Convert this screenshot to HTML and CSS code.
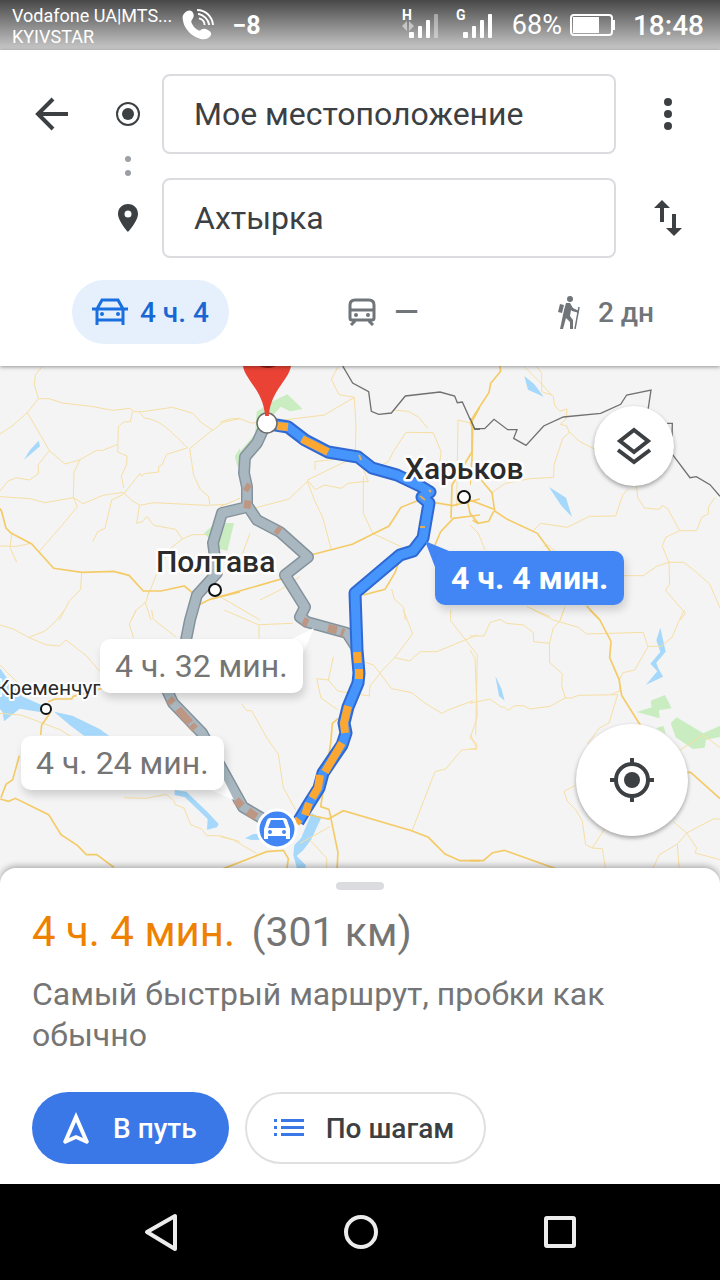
FILE: index.html
```html
<!DOCTYPE html>
<html lang="ru">
<head>
<meta charset="utf-8">
<meta name="viewport" content="width=device-width, initial-scale=1">
<title>Маршрут: Ахтырка</title>
<link rel="stylesheet" href="styles.css">
</head>
<body>
<div class="statusbar">
  <div class="carriers"><span>Vodafone UA|MTS...</span><span>KYIVSTAR</span></div>
  <svg class="call" width="32" height="34" viewBox="0 0 34 34" fill="none" stroke="#fff">
    <path fill="#fff" stroke="none" d="M3 4c3-3 6-3 8-1 2 3 2 5 0 8-2 2-1 4 1 7 2 3 4 4 7 5 2-2 5-3 8-1 4 2 5 4 3 7-3 4-9 4-15 1C7 26 2 19 1 12 0 8 1 6 3 4z"/>
    <path stroke-width="2" d="M18 10c4 1 6 3 6 7M17 5c6 1 11 6 12 12M16 1c9 0 16 7 17 16"/>
  </svg>
  <span class="temp">−8</span>
  <div class="status-right">
    <svg width="94" height="32" viewBox="0 0 94 32" fill="#fff">
      <text class="net" x="0" y="11">H</text><text class="net" x="54" y="11">G</text>
      <path d="M0 17l5-5v10zM12 17l-5-5v10z" opacity=".5"/>
      <rect x="7" y="23" width="5" height="6" rx="1"/><rect x="16" y="17" width="4" height="12" rx="1"/><rect x="24" y="11" width="4" height="18" rx="1"/><rect x="32" y="5" width="4" height="24" rx="1" opacity=".4"/>
      <rect x="61" y="23" width="5" height="6" rx="1"/><rect x="70" y="17" width="4" height="12" rx="1"/><rect x="78" y="11" width="4" height="18" rx="1"/><rect x="86" y="5" width="4" height="24" rx="1"/>
    </svg>
    <span class="percent">68%</span>
    <svg width="46" height="24" viewBox="0 0 46 24"><rect x="1" y="2" width="41" height="20" rx="3" fill="none" stroke="#fff" stroke-width="2"/><rect x="3" y="4" width="26" height="16" fill="#fff"/><path d="M43 7h2v10h-2z" fill="#fff"/></svg>
    <span class="clock">18:48</span>
  </div>
</div>

<header class="directions">
  <form class="points">
    <button class="icon-btn back" type="button" aria-label="Назад"><svg width="36" height="36" viewBox="0 0 36 36" fill="none" stroke="#3c4043" stroke-width="4"><path d="M34 18H5M19 3L4 18l15 15"/></svg></button>
    <label class="point-icon from" for="from" aria-label="Откуда"><svg width="24" height="24" viewBox="0 0 24 24"><circle cx="12" cy="12" r="11" fill="none" stroke="#3c4043" stroke-width="2"/><circle cx="12" cy="12" r="6" fill="#3c4043"/></svg></label>
    <input id="from" class="field from-field" type="text" value="Мое местоположение">
    <button class="icon-btn menu" type="button" aria-label="Меню"><svg width="8" height="32" viewBox="0 0 8 32" fill="#3c4043"><circle cx="4" cy="4" r="4"/><circle cx="4" cy="16" r="4"/><circle cx="4" cy="28" r="4"/></svg></button>
    <span class="between"><svg width="6" height="22" viewBox="0 0 6 22" fill="#9aa0a6"><circle cx="3" cy="4" r="3"/><circle cx="3" cy="18" r="3"/></svg></span>
    <label class="point-icon to" for="to" aria-label="Куда"><svg width="20" height="28" viewBox="0 0 20 28"><path fill="#3c4043" fill-rule="evenodd" d="M10 0C4 0 0 4.400 0 10c0 7 10 18 10 18s10-11 10-18C20 4.400 16 0 10 0zm0 6.500a3.500 3.500 0 1 1 0 7 3.500 3.500 0 0 1 0-7z"/></svg></label>
    <input id="to" class="field to-field" type="text" value="Ахтырка">
    <button class="icon-btn swap" type="button" aria-label="Поменять местами"><svg width="28" height="36" viewBox="0 0 28 36" fill="#3c4043"><path d="M8 0l8 8h-6v14H6V8H0zM18 14h4v14h6l-8 8-8-8h6z"/></svg></button>
  </form>
  <nav class="modes">
    <button class="mode active" type="button">
      <svg width="36" height="28" viewBox="0 0 36 28" fill="none" stroke="#1a6fe0" stroke-width="3"><path d="M5 11L10 2h16l5 9v11H5zM0 11h36M5 20v7M31 20v7"/><circle cx="10" cy="16" r="2" fill="#1a6fe0" stroke="none"/><circle cx="26" cy="16" r="2" fill="#1a6fe0" stroke="none"/></svg>
      <span>4 ч. 4</span></button>
    <button class="mode" type="button">
      <svg width="28" height="28" viewBox="0 0 28 28" fill="none" stroke="#70757a" stroke-width="3"><path d="M7 2h14q5 0 5 5v13q0 2-2 2H4q-2 0-2-2V7q0-5 5-5zM2 12h24M7 23l-4 4M21 23l4 4"/><circle cx="8" cy="17" r="2" fill="#70757a" stroke="none"/><circle cx="20" cy="17" r="2" fill="#70757a" stroke="none"/></svg>
      <span class="none">—</span></button>
    <button class="mode" type="button">
      <svg width="22" height="33" viewBox="0 0 22 33" fill="#70757a"><circle cx="12" cy="3" r="3"/><path d="M2 8l4 1-2 8-4-1zM8 7h4l3 5 6 3v2l-7-2-1-1-1 6 3 4v9h-3v-7l-4-4-3 11H2L6 14z"/><path d="M21 11l-4 22" stroke="#70757a" stroke-width="1.500"/></svg>
      <span>2 дн</span></button>
  </nav>
</header>

<main class="map">
  <svg class="map-canvas" viewBox="0 366 720 518" preserveAspectRatio="xMidYMid slice" fill="none">
    <rect x="0" y="366" width="720" height="518" fill="#f4f4f4"/>

    <svg x="0" y="360" width="240" height="260" viewBox="0 0 720 780">
      <path class="water" d="M72 299l18-29 26-28 4 17z"/>
      <path class="park" d="M720 265l-15 22 7 24h8zM612 520l34-30h55l-30 80-18-10z"/>
      <path class="minor" d="M126 20l-20 25-3 28 12 43-33 42-46 40-36 24M115 116h32l40 13 86 10 65 12 51-6 13 10h25l90-13 62 18 25 28 35 23 30-24 54-12M637 210l-68 56 12 80 20 42 25 22 3 22M563 264c-60-60-85-85-130-90l-15-18M397 155l-6 30-20 1-16 14-2 76 28 12-1 25-16 35 7 35M353 253l-45 18h-18l-52 29-43 12-46-39-67-115M148 272l-34 43 2 25-27 20-40-7-25 10-24 30M240 300l-18 36-2 76 12 28-46 56-70 80M0 410l90 6 45 12 86-15 28 18 60-25 61-9 25 24 25 15 40-8 160 8 60-3M370 403l50-63 5 9 8-8 43-5v-16l10-5 14-32 64-20M370 403l-35 17-20 85-22 10-15 30M418 438l-8 52 17-5 14-16 20 27 66 12 20 29 30-13h42M548 536l-35 28-40 70-28 70M0 558l50 1 42-9M35 524l-5 38 20 45M245 638l-3 50-34 35-30 58M446 695l-7 30-30 25-15 31M435 725l18 55"/>
      <path class="major" d="M0 445l5 10 13 49 15 15 62 33 66 73 85 12 95-3 46 12 43 47h53l70-15 30 25M600 733l30-15 90-22"/>
    </svg>

    <svg x="220" y="360" width="260" height="260" viewBox="0 0 780 780">
      <path class="park" d="M110 155l45-30 47-22 46 44-38 7-28-14-68 77-46 83-15 22-8-30 60-70z"/>
      <path d="M0 490h42l-20 82-22-5z" class="park"/>
      <path class="minor" d="M0 187l28-10 30-2 35 14 90-8 130-16 90-53-46-8-23-46 20-38M403 112l5 90-2 70M520 150l45 4 30 17 28 33M445 335l60-30 15-30 38-58 82 1 23 57-5 45M415 290l30 75-16 0-45 5-20 15-51-10-27 14-24-29 118-57-20-7-75 9 0 25M262 364l-55 53-190 50M262 364l22 58 24 50 25 93M430 350v110l28 60 85 40M90 520l-22 60-10 50M0 710l120 70M710 440l4-260 40 10M515 687l8 30 28 25 5 40M240 650l-60 40-60 30M0 440l60-25"/>
      <path class="major" d="M272 585l125-32 110-55 36-56 55-22 100 17 82-20M0 710l190-55M430 705l65-17 30-50 22-60M780 140l-24 45v90l-60 100-3 100M780 465l-80 10-38 40-30 70M740 410l10 50 25 30"/>
      <path class="border" d="M368 18l30 51 48 26 8 59 22 9 38-4 42-51 104-12 44 12 8 20 15-2 37 82h18"/>
    </svg>

    <svg x="470" y="360" width="250" height="260" viewBox="0 0 750 780">
      <path class="water" d="M163 48l30 25 28 37-47-21zM237 381l51 32 18 58-32-34z"/>
      <path class="minor" d="M163 20l45 45 42 45 4 26 15 17 22-6-3 30-17 16 19 5 8 20-20 17-26 80-1 37-70 4-75 14-42 29M298 216l30 28 50 25M200 20l15 20 0 55 30 10M500 380l3 32 20 32 46 4 7-12 17 10 36 66-42 20-10 27 20 49 2 65-13 17 60 70-18 24M477 385l-18 18-22 65-79 1-66 33-80-12-23 23M460 647h60l40-28 36-12h45l33 25 45 40 31 72M630 512l50 0 15-40 20-10v-20l20-30M0 495l25 25 20 50M170 740l70 30M285 740l-15 40M220 560l15-5 20 20"/>
      <path class="major" d="M90 18l2 16-30 36-5 27L0 185l8 20-2 90-6 80M0 420l70 27M25 350l41 48 8 55 38 25 90 42 40 55M8 480l15 10 33-6 15-30M350 738l40 42"/>
      <path class="border" d="M0 175l14 31h30l28-28 41 31h28l-10 26 37 21 53-58 59-27 112-11 60-27 18-28 73-15-12 80M590 190h17l-2 90 55 73 19-3 41 24 30 35"/>
    </svg>

    <svg x="0" y="610" width="240" height="260" viewBox="0 0 720 780">
      <path class="water" d="M0 175l35 50 33 35 76 33-10 15-75-12-47 38-4-28-8-8zM162 305l55 12 82 40 28 20h-75l-40-30zM524 540l35 5 67 65 30 32-5 10-30 7 2-32-68-65-31-7z"/>
      <path class="minor" d="M0 45l40 12 45 25 52 22 41 4 20-18 62 48 38 45M85 83l50-20 30-27 28-36M408 0l-20 42 13 43M455 0l5 28 69 54M0 165l20 20 50 50M60 314l120 45 32 20M0 310l60 5M372 563l66 2 60-12 23 18 5 13 26 10 20 50 33 13 15 20h40l60 18"/>
      <path class="major" d="M150 310l-25 35-3 30M145 275l20-8h50l5-8 85-24M0 567l26 7 20-9 100 49 37 60 50 33 26 27h31l52 38M58 437l-20 72-20 14-15 40"/>
    </svg>

    <svg x="220" y="610" width="260" height="260" viewBox="0 0 780 780">
      <path class="water" d="M75 685l25-13h25v17l-30 1zM275 610l28 15-30 65-23 30-20 18 27 27v15h-25l-12-45 3-30 20-20z"/>
      <path class="minor" d="M12 0l105 45v45M65 282l15 20h15l48 86 32 45 15 100 37 67M118 44l100-4M340 140l-15 70-35-4 13 58 50 35M430 155l30 10 20 25 35 46 60 12 38 30 52 32 22-11 73-27M480 188l44-45 45 10 32-28h50l120-50M524 143l54-72-28-71M690 30l82 105-5 240M692 0v30M752 375l18 40-45 5-48 57-32 8-68 175M480 190l-30 38-2 30-95-15-30-35M240 700l90-50M120 690l80-80M270 690l50 55v35M0 680l40 10 70 40"/>
      <path class="major" d="M355 325l-18 15-5 60-30 190 25 8 27 130-3 50M270 615l55 12 45-25 205 60 50 20 50 50 45 20h83M0 780l140-55 50-4 15 25-5 35"/>
    </svg>

    <svg x="470" y="610" width="250" height="260" viewBox="0 0 750 780">
      <path class="water" d="M571 53l16 72-28 33 5 15 15 27-51 24 34-40-21-23 30-35-12-35zM76 198l19 40 9 34-17-14z"/>
      <path class="park" d="M500 306l45-14-3-20 43-17 20 40-38 6 2 24zM602 340l18-18 80 48 50-23v34l-42 8-4 24-35 4-52-35zM558 355l22-8 8 25z"/>
      <path class="minor" d="M0 78h42l18-40 30-10 20 12 50 5 30 23 1 27 48 5 10-45 22-24 10-31M190 0l60 30 75 22 25 20 170-5 13 42h40l33-27 20-47 17-35M534 110l-40 70-35 8-10 20v35l-25 10M238 98l1 60 38 33-2 35 11 39M0 280l60-13 33 24h10l10 10 22-14h25l20 10 60-8 45-25h20l20-8 118-2-26 85-29 15-36 48M0 120l15 25 7 175-22 65 20 15v18H0M315 527l-33 17 10 30 25 25 20 35 10 70 20 10 30 2 10 62M367 714l40-62M630 420l70-45 50 38M610 635l40 34 80-42h20M650 669l-28 33-55 33-20 45M650 669l30 45-5 15 75 20M622 702l5 70"/>
      <path class="major" d="M360 0l29 29 34 65-4 49 28 65 8 48 50 80 100 150 57 1 88 79M0 752h40l28-24 35-7 155 55"/>
    </svg>

    <g stroke-linejoin="round">
      <path class="alt-edge" d="M263 430L257 443 245 457 244 473 247 487 247 507 222 513 213 543 217 573 197 595 190 620 185 645 167 690 173 703 202 733 228 780 243 807 265 820M247 505L257 520 280 532 308 557 285 575 305 607 300 617 307 622 347 633 356 647"/>
      <path class="alt" d="M263 430L257 443 245 457 244 473 247 487 247 507 222 513 213 543 217 573 197 595 190 620 185 645 167 690 173 703 202 733 228 780 243 807 265 820M247 505L257 520 280 532 308 557 285 575 305 607 300 617 307 622 347 633 356 647"/>
      <path class="alt-jam" d="M245 486l5 3M244 504l7 1M276 529l4 3M303 621l5 2M328 628l9 2M341 632l3 1M169 699l4 4M178 709l12 14M191 725l4 4M236 800l6 6M248 811l8 6"/>
      <path class="main-edge" d="M270 424L288 427 305 440 328 452 358 457 372 468 397 475 420 486 430 492 422 497 429 503 423 538 413 551 400 555 355 593 357 650 359 673 358 683 348 707 344 723 346 733 342 745 323 773 319 788 307 807 298 822"/>
      <path class="main" d="M270 424L288 427 305 440 328 452 358 457 372 468 397 475 420 486 430 492 422 497 429 503 423 538 413 551 400 555 355 593 357 650 359 673 358 683 348 707 344 723 346 733 342 745 323 773 319 788 307 807 298 822"/>
      <path class="jam" d="M277 426l11 1M302 439l26 13M357 652l1 11M359 669v10M348 706l-4 17 1 10M342 743L325 772M320 775l-2 13-6 10M309 803l-4 12M299 819l-3 4"/>
      <path class="spark" d="M359 455l2 5M420 496l5 4M429 490l2 2M420 527h5"/>
    </g>

    <path d="M243 366h48c-2 14-20 24-22 49h-4c-2-25-20-35-22-49z" fill="#ea4335"/>
    <path d="M259 366h17q-8 4-17 0z" fill="#8e1c14"/>
    <circle cx="267" cy="423" r="10" fill="#fff" stroke="#6b6b6b" stroke-width="1.500"/>
    <path d="M266 402h2l1 14h-4z" fill="#ea4335"/>

    <g class="town"><circle cx="464" cy="497" r="6"/><circle cx="215" cy="590" r="6"/><circle cx="46" cy="709" r="5"/></g>
    <text class="city" x="405" y="479">Харьков</text>
    <text class="city" x="156" y="572">Полтава</text>
    <text class="city small" x="-4" y="695">Кременчуг</text>

    <circle cx="277" cy="829" r="19" fill="#4285f4" stroke="#fff" stroke-width="3"/>
    <path fill="#fff" fill-rule="evenodd" d="M270 818h14q2 0 3 2l3 9v10h-4v-3h-18v3h-4v-10l3-9q1-2 3-2zm1 2l-3 8h18l-3-8zM270 830a2 2 0 1 0 0 4 2 2 0 0 0 0-4zm14 0a2 2 0 1 0 0 4 2 2 0 0 0 0-4z"/>

    <path d="M425 541l24 10-14 16z" fill="#4285f4"/>
    <path d="M286 642l28-14-12 27zM206 788l17-10 11 22z" fill="#fff"/>
  </svg>
  <button class="callout chosen" type="button">4 ч. 4 мин.</button>
  <button class="callout second" type="button">4 ч. 32 мин.</button>
  <button class="callout third" type="button">4 ч. 24 мин.</button>
  <button class="fab layers" type="button" aria-label="Слои"><svg width="36" height="40" viewBox="0 0 36 40" fill="none" stroke="#3c4043" stroke-width="4"><path d="M18 4l14 11-14 11L4 15zM2 24l16 12 16-12"/></svg></button>
  <button class="fab locate" type="button" aria-label="Мое местоположение"><svg width="44" height="44" viewBox="0 0 44 44" fill="none" stroke="#3c4043" stroke-width="4"><circle cx="22" cy="22" r="16"/><circle cx="22" cy="22" r="8" fill="#3c4043" stroke="none"/><path d="M22 0v6M22 38v6M0 22h6M38 22h6"/></svg></button>
</main>

<section class="sheet">
  <span class="handle"></span>
  <h1 class="summary"><span class="time">4 ч. 4 мин.</span> <span class="distance">(301 км)</span></h1>
  <p class="note">Самый быстрый маршрут, пробки как обычно</p>
  <div class="actions">
    <button class="action start" type="button"><svg width="26" height="32" viewBox="0 0 26 32"><path fill="#fff" fill-rule="evenodd" d="M13 0l13 30-2 2-11-5-11 5-2-2zm0 10L6 26l7-3 7 3z"/></svg><span>В путь</span></button>
    <button class="action steps" type="button"><svg width="30" height="18" viewBox="0 0 30 18" fill="#3b78e7"><path d="M7 0h23v3H7zM7 7h23v3H7zM7 14h23v3H7zM0 0h3v3H0zM0 7h3v3H0zM0 14h3v3H0z"/></svg><span>По шагам</span></button>
  </div>
</section>

<nav class="navbar">
  <button type="button" aria-label="Назад"><svg width="34" height="38" viewBox="0 0 34 38" fill="none" stroke="#ececec" stroke-width="4" stroke-linejoin="round"><path d="M31 3v33L3 19z"/></svg></button>
  <button type="button" aria-label="Домой"><svg width="36" height="36" viewBox="0 0 36 36" fill="none" stroke="#ececec" stroke-width="4"><circle cx="18" cy="18" r="15"/></svg></button>
  <button type="button" aria-label="Недавние"><svg width="32" height="32" viewBox="0 0 32 32" fill="none" stroke="#ececec" stroke-width="4"><rect x="2" y="2" width="28" height="28" rx="1"/></svg></button>
</nav>
</body>
</html>
```

FILE: styles.css
```css
* { box-sizing: border-box; }

body {
  margin: 0;
  min-height: 100vh;
  display: flex;
  flex-direction: column;
  font-family: Roboto, "Noto Sans", sans-serif;
  background: #fff;
  color: #3c4043;
}

button {
  font: inherit;
  color: inherit;
  border: 0;
  padding: 0;
  background: none;
}

svg { display: block; flex: none; }

/* Status bar */
.statusbar {
  height: 50px;
  padding: 0 16px 0 12px;
  display: flex;
  align-items: center;
  background: linear-gradient(#484848, #cacaca);
  color: #fff;
  white-space: nowrap;
}
.carriers {
  display: flex;
  flex-direction: column;
  font-size: 18px;
  line-height: 21px;
  padding-top: 2px;
}
.call { margin-left: 10px; }
.temp { margin-left: 18px; font-size: 25px; font-weight: 700; }
.status-right {
  margin-left: auto;
  display: flex;
  align-items: center;
}
.net { font-size: 14px; font-weight: 700; }
.percent { margin: 0 8px 0 16px; font-size: 27px; }
.clock { margin-left: 17px; font-size: 28px; font-weight: 500; }

/* Directions header */
.directions {
  position: relative;
  z-index: 2;
  padding: 24px 0 22px;
  background: #fff;
  box-shadow: 0 1px 4px rgba(0, 0, 0, 0.4);
}
.points {
  display: grid;
  grid-template-columns: 104px 48px 1fr 104px;
  grid-template-rows: 80px 24px 80px;
  grid-template-areas:
    "back from from-field menu"
    ". between . ."
    ". to to-field swap";
}
.icon-btn, .point-icon, .between {
  display: flex;
  align-items: center;
  justify-content: center;
}
.back { grid-area: back; }
.from { grid-area: from; }
.from-field { grid-area: from-field; }
.menu { grid-area: menu; }
.between { grid-area: between; }
.to { grid-area: to; }
.to-field { grid-area: to-field; }
.swap { grid-area: swap; }
.field {
  min-width: 0;
  margin-left: 10px;
  padding: 0 30px;
  border: 2px solid #dadce0;
  border-radius: 8px;
  background: #fff;
  color: #3c4043;
  font: 32px Roboto, "Noto Sans", sans-serif;
}
.modes {
  margin-top: 22px;
  padding: 0 46px 0 72px;
  display: flex;
  justify-content: space-between;
}
.mode {
  height: 64px;
  padding: 0 20px;
  display: flex;
  align-items: center;
  gap: 18px;
  border-radius: 32px;
  color: #70757a;
  font-size: 28px;
  font-weight: 500;
}
.mode.active { gap: 12px; background: #e6f0fd; color: #1967d2; }
.mode .none { font-size: 32px; }

/* Map */
.map {
  position: relative;
  flex: 1 0 502px;
  overflow: hidden;
}
.map-canvas {
  position: absolute;
  inset: 0;
  width: 100%;
  height: 100%;
}
.minor { stroke: #f7dfa4; stroke-width: 3; }
.major { stroke: #f4cb67; stroke-width: 5; }
.border { stroke: #707070; stroke-width: 4; }
.water { fill: #a5d8fb; }
.park { fill: #c9edc0; }
.alt-edge { stroke: #84929c; stroke-width: 12; }
.alt { stroke: #a9b8c0; stroke-width: 9; }
.alt-jam { stroke: #bd9684; stroke-width: 8; }
.main-edge { stroke: #2f68d3; stroke-width: 13; }
.main { stroke: #4595fc; stroke-width: 9; }
.jam { stroke: #fba732; stroke-width: 8; }
.spark { stroke: #e0ae62; stroke-width: 2; }
.town circle { fill: #fff; stroke: #111; stroke-width: 2; }
.city {
  fill: #2b2b2b;
  stroke: #fff;
  stroke-width: 5px;
  stroke-linejoin: round;
  paint-order: stroke;
  font-size: 30px;
  font-weight: 500;
}
.city.small { font-size: 21px; font-weight: 400; stroke-width: 4px; }
.callout {
  position: absolute;
  height: 54px;
  padding: 0 15px;
  border-radius: 10px;
  background: #fff;
  color: #757575;
  font-size: 32px;
  white-space: nowrap;
  box-shadow: 2px 5px 9px rgba(0, 0, 0, 0.16);
}
.callout.chosen {
  left: 435px;
  top: 185px;
  padding: 0 16px;
  background: #4285f4;
  color: #fff;
  font-weight: 700;
}
.callout.second { left: 100px; top: 273px; }
.callout.third { left: 21px; top: 370px; }
.fab {
  position: absolute;
  display: flex;
  align-items: center;
  justify-content: center;
  border-radius: 50%;
  background: #fff;
  box-shadow: 0 2px 4px rgba(0, 0, 0, 0.35);
}
.layers { right: 46px; top: 40px; width: 80px; height: 80px; }
.locate { right: 32px; bottom: 48px; width: 112px; height: 112px; }

/* Bottom sheet */
.sheet {
  position: relative;
  z-index: 1;
  margin-top: -16px;
  padding: 38px 32px 20px;
  background: #fff;
  border-radius: 16px 16px 0 0;
  box-shadow: 0 -2px 6px rgba(0, 0, 0, 0.3);
}
.handle {
  position: absolute;
  top: 14px;
  left: 50%;
  width: 48px;
  height: 8px;
  margin-left: -24px;
  border-radius: 4px;
  background: #dadce0;
}
.summary {
  margin: 0;
  font-size: 42px;
  line-height: 52px;
  font-weight: 400;
}
.time { color: #ee8100; }
.distance { margin-left: 6px; color: #757575; font-size: 41px; }
.note {
  margin: 16px 0 0;
  color: #757575;
  font-size: 32px;
  line-height: 41px;
}
.actions { display: flex; gap: 16px; margin-top: 36px; }
.action {
  height: 72px;
  padding: 0 32px 0 31px;
  display: flex;
  align-items: center;
  border-radius: 36px;
  font-size: 28px;
  font-weight: 500;
}
.start { gap: 24px; background: #3b78e7; color: #fff; }
.steps { gap: 22px; padding: 0 30px 0 27px; border: 2px solid #e0e0e0; }

/* System navigation */
.navbar {
  height: 96px;
  padding: 0 144px;
  display: flex;
  align-items: center;
  justify-content: space-between;
  background: #000;
}
```
